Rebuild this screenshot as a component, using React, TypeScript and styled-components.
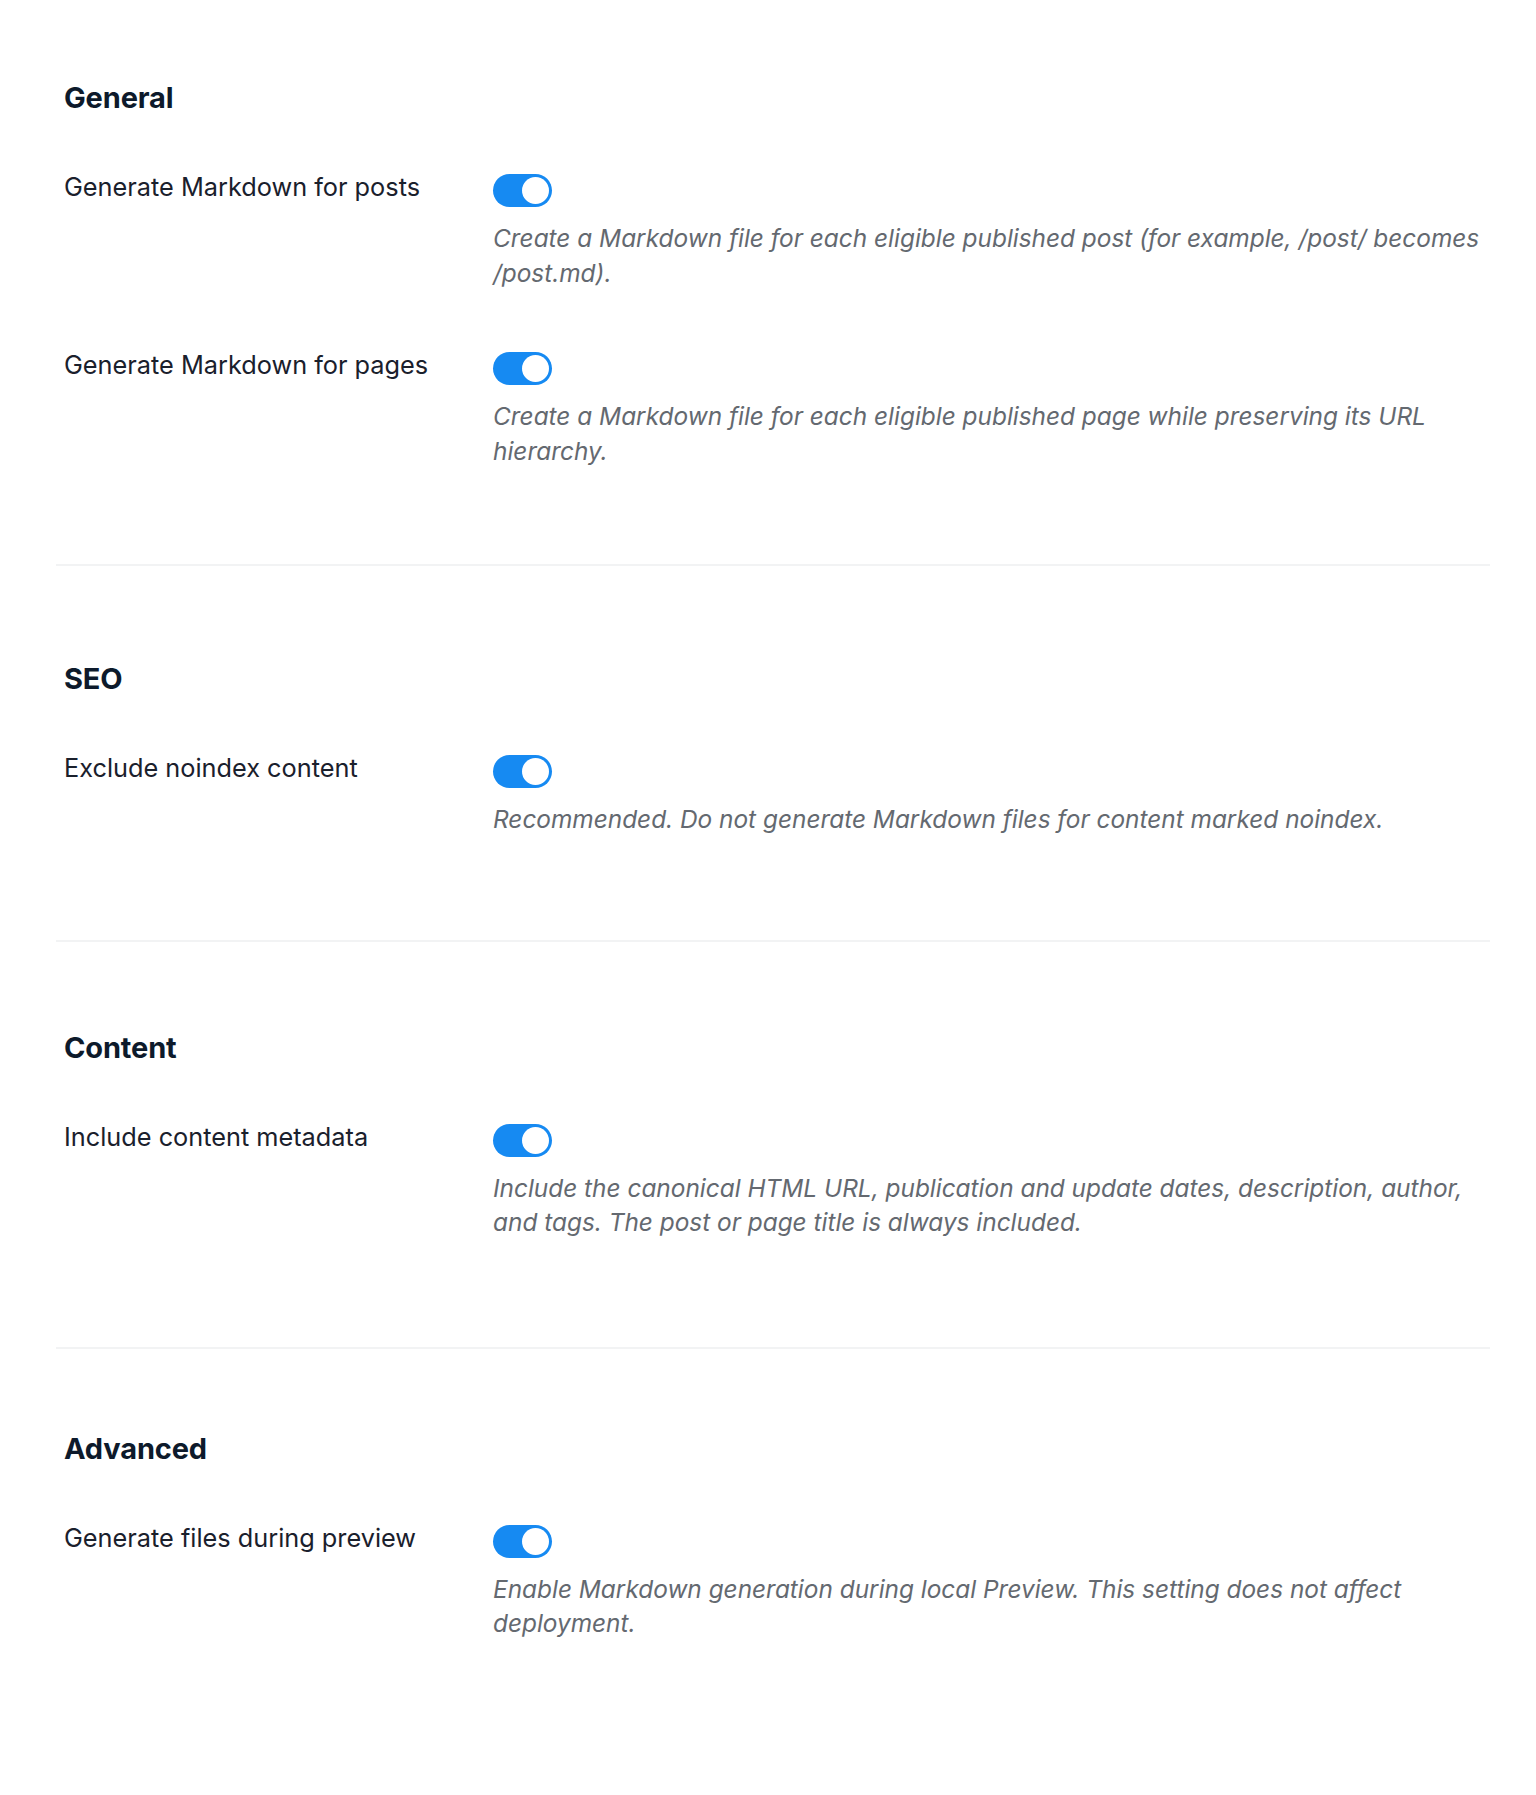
import React, { useState } from 'react';
import styled, { createGlobalStyle } from 'styled-components';

const GlobalStyle = createGlobalStyle`
  html, body {
    margin: 0;
    padding: 0;
    background: #ffffff;
  }
  body {
    font-family: Inter, "Noto Sans", "Liberation Sans", sans-serif;
    -webkit-font-smoothing: antialiased;
  }
`;

const Page = styled.div`
  width: 1434px;
  min-height: 1795px;
  padding: 0 46px 0 56px;
  box-sizing: content-box;
`;

const Section = styled.section<{ $pt: number; $pb: number }>`
  padding: ${({ $pt }) => $pt}px 0 ${({ $pb }) => $pb}px 8px;
  border-bottom: 2px solid #f2f3f4;

  &:last-child {
    border-bottom: none;
  }
`;

const Heading = styled.h2`
  margin: 0 0 54px;
  font-size: 29px;
  line-height: 36px;
  font-weight: 700;
  color: #0d1a2b;
  letter-spacing: -0.15px;
`;

const Rows = styled.div`
  display: flex;
  flex-direction: column;
  gap: 58px;
`;

const Row = styled.div`
  display: grid;
  grid-template-columns: 429px 1fr;
  align-items: start;
`;

const Label = styled.label`
  font-size: 25.3px;
  line-height: 34px;
  color: #1a202c;
`;

const Control = styled.div`
  display: flex;
  flex-direction: column;
  align-items: flex-start;
`;

const Switch = styled.button<{ $on: boolean }>`
  position: relative;
  width: 59px;
  height: 33px;
  margin-top: 4px;
  padding: 0;
  border: none;
  border-radius: 17px;
  background: ${({ $on }) => ($on ? '#168af2' : '#c3c8cf')};
  cursor: pointer;
  transition: background 0.2s;

  &::after {
    content: '';
    position: absolute;
    top: 3px;
    left: ${({ $on }) => ($on ? '29px' : '3px')};
    width: 27px;
    height: 27px;
    border-radius: 50%;
    background: #ffffff;
    transition: left 0.2s;
  }
`;

const Description = styled.p`
  margin: 14px 0 0;
  font-size: 24.4px;
  line-height: 34.5px;
  font-style: italic;
  color: #646970;
`;

interface Setting {
  label: string;
  description: string;
}

interface Group {
  title: string;
  pt: number;
  pb: number;
  settings: Setting[];
}

const groups: Group[] = [
  {
    title: 'General',
    pt: 80,
    pb: 96,
    settings: [
      {
        label: 'Generate Markdown for posts',
        description:
          'Create a Markdown file for each eligible published post (for example, /post/ becomes /post.md).',
      },
      {
        label: 'Generate Markdown for pages',
        description:
          'Create a Markdown file for each eligible published page while preserving its URL hierarchy.',
      },
    ],
  },
  {
    title: 'SEO',
    pt: 95,
    pb: 103,
    settings: [
      {
        label: 'Exclude noindex content',
        description: 'Recommended. Do not generate Markdown files for content marked noindex.',
      },
    ],
  },
  {
    title: 'Content',
    pt: 88,
    pb: 107,
    settings: [
      {
        label: 'Include content metadata',
        description:
          'Include the canonical HTML URL, publication and update dates, description, author, and tags. The post or page title is always included.',
      },
    ],
  },
  {
    title: 'Advanced',
    pt: 82,
    pb: 0,
    settings: [
      {
        label: 'Generate files during preview',
        description:
          'Enable Markdown generation during local Preview. This setting does not affect deployment.',
      },
    ],
  },
];

const SettingRow: React.FC<{ setting: Setting }> = ({ setting }) => {
  const [on, setOn] = useState(true);
  return (
    <Row>
      <Label>{setting.label}</Label>
      <Control>
        <Switch
          type="button"
          role="switch"
          aria-checked={on}
          aria-label={setting.label}
          $on={on}
          onClick={() => setOn(!on)}
        />
        <Description>{setting.description}</Description>
      </Control>
    </Row>
  );
};

const App: React.FC = () => {
  return (
    <>
      <GlobalStyle />
      <Page>
        {groups.map((group) => (
          <Section key={group.title} $pt={group.pt} $pb={group.pb}>
            <Heading>{group.title}</Heading>
            <Rows>
              {group.settings.map((s) => (
                <SettingRow key={s.label} setting={s} />
              ))}
            </Rows>
          </Section>
        ))}
      </Page>
    </>
  );
};

export default App;
